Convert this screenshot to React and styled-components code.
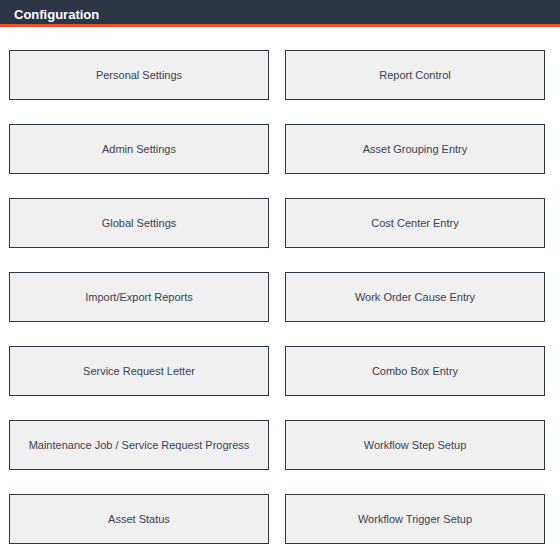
import React from 'react'
import styled, { createGlobalStyle } from 'styled-components'

const GlobalStyle = createGlobalStyle`
	body {
		margin: 0;
		background: #fff;
		font-family: 'Liberation Sans', Arial, sans-serif;
	}
`

const items = [
	'Personal Settings',
	'Report Control',
	'Admin Settings',
	'Asset Grouping Entry',
	'Global Settings',
	'Cost Center Entry',
	'Import/Export Reports',
	'Work Order Cause Entry',
	'Service Request Letter',
	'Combo Box Entry',
	'Maintenance Job / Service Request Progress',
	'Workflow Step Setup',
	'Asset Status',
	'Workflow Trigger Setup',
]

const App = () => {
	return (
		<>
			<GlobalStyle />
			<Page>
				<Header>
					<h1>Configuration</h1>
				</Header>
				<Grid>
					{items.map((label) => (
						<Tile key={label}>{label}</Tile>
					))}
				</Grid>
			</Page>
		</>
	)
}

const Page = styled.div`
	width: 560px;
	height: 560px;
	overflow: hidden;
`

const Header = styled.div`
	height: 24px;
	background: #2b3544;
	border-bottom: 3px solid #e8532a;
	display: flex;
	align-items: center;
	padding-left: 14px;
	h1 {
		margin: 0;
		color: #fff;
		font-size: 13px;
		font-weight: bold;
		padding-top: 4px;
	}
`

const Grid = styled.div`
	display: grid;
	grid-template-columns: 260px 260px;
	column-gap: 16px;
	row-gap: 24px;
	padding: 23px 0 0 9px;
`

const Tile = styled.button`
	height: 50px;
	box-sizing: border-box;
	background: #f0f0f0;
	border: 1px solid #2b3544;
	border-radius: 0;
	color: #3b4252;
	font-family: 'Liberation Sans', Arial, sans-serif;
	font-size: 11px;
	padding: 0;
	display: flex;
	align-items: center;
	justify-content: center;
	cursor: pointer;
`

export default App
